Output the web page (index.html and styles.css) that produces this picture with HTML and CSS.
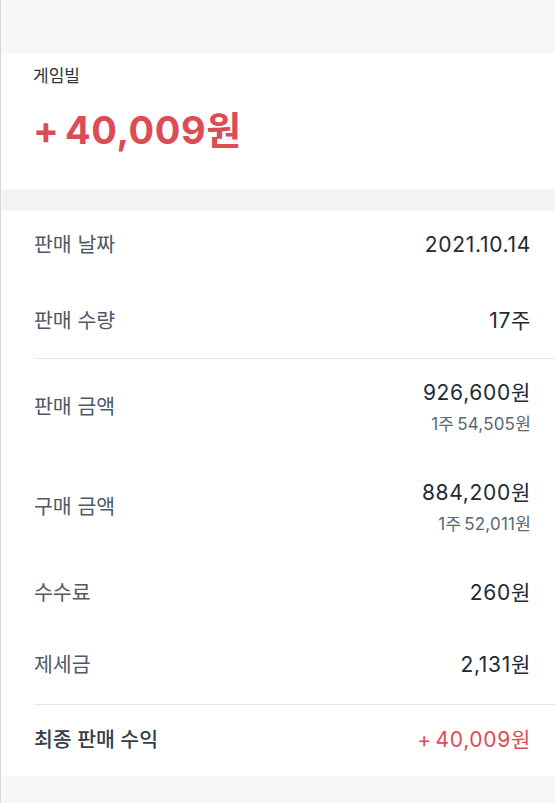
FILE: index.html
```html
<!DOCTYPE html>
<html lang="ko">
<head>
<meta charset="utf-8">
<link rel="stylesheet" href="styles.css">
</head>
<body>
<div class="page">
  <div class="band-top"></div>
  <section class="summary">
    <div class="summary-name">게임빌</div>
    <div class="summary-amount">+ 40,009원</div>
  </section>
  <div class="band-gap"></div>
  <section class="details">
    <div class="group group-1">
      <div class="row"><span class="label">판매 날짜</span><span class="value">2021.10.14</span></div>
      <div class="row"><span class="label">판매 수량</span><span class="value">17주</span></div>
    </div>
    <div class="divider"></div>
    <div class="group group-2">
      <div class="row"><span class="label">판매 금액</span><span class="value-block"><span class="value">926,600원</span><span class="sub">1주 54,505원</span></span></div>
      <div class="row"><span class="label">구매 금액</span><span class="value-block"><span class="value">884,200원</span><span class="sub">1주 52,011원</span></span></div>
      <div class="row"><span class="label">수수료</span><span class="value">260원</span></div>
      <div class="row"><span class="label">제세금</span><span class="value">2,131원</span></div>
    </div>
    <div class="divider"></div>
    <div class="group group-3">
      <div class="row"><span class="label label-strong">최종 판매 수익</span><span class="value value-red">+ 40,009원</span></div>
    </div>
  </section>
  <div class="band-bottom"></div>
</div>
</body>
</html>
```
FILE: styles.css
```css
* { box-sizing: border-box; }
html, body {
  margin: 0;
  padding: 0;
  background: #f7f7f8;
}
body {
  font-family: Inter, "Noto Sans CJK KR", sans-serif;
  color: #333d4b;
}
.page {
  border-left: 1px solid #d6d6d8;
  min-height: 803px;
}
.band-top { height: 53px; background: #f7f7f8; }
.band-gap { height: 22px; background: #f2f3f5; margin-left: 2px; }
.band-bottom { height: 26px; background: #f7f7f8; }

.summary {
  background: #ffffff;
  height: 136px;
  padding: 12px 0 0 32px;
}
.summary-name {
  font-size: 17px;
  line-height: 22px;
  color: #2b3340;
}
.summary-amount {
  margin-top: 20px;
  font-size: 38px;
  line-height: 46px;
  font-weight: 700;
  color: #dc4c55;
  letter-spacing: 0.6px;
  word-spacing: -4px;
}

.details {
  background: #ffffff;
  padding-left: 33px;
}
.group {
  display: flex;
  flex-direction: column;
  padding-right: 24px;
}
.group-1 { gap: 48px; padding-top: 20px; padding-bottom: 23px; }
.group-2 { gap: 44px; padding-top: 20px; padding-bottom: 25px; }
.group-3 { padding-top: 21px; padding-bottom: 22px; }

.row {
  display: flex;
  justify-content: space-between;
  align-items: center;
}
.label {
  font-size: 20.5px;
  line-height: 28px;
  color: #4e5968;
}
.label-strong { color: #333d4b; font-weight: 500; }
.value {
  font-size: 21px;
  line-height: 28px;
  font-weight: 400;
  color: #222a36;
  letter-spacing: 0.7px;
}
.value-red { color: #dc4c55; word-spacing: -3px; }
.value-block {
  display: flex;
  flex-direction: column;
  align-items: flex-end;
  gap: 6px;
}
.sub {
  font-size: 17px;
  line-height: 22px;
  color: #5c6673;
  letter-spacing: 0.2px;
  word-spacing: -2px;
}
.divider {
  height: 1px;
  background: #e5e8eb;
}
```
